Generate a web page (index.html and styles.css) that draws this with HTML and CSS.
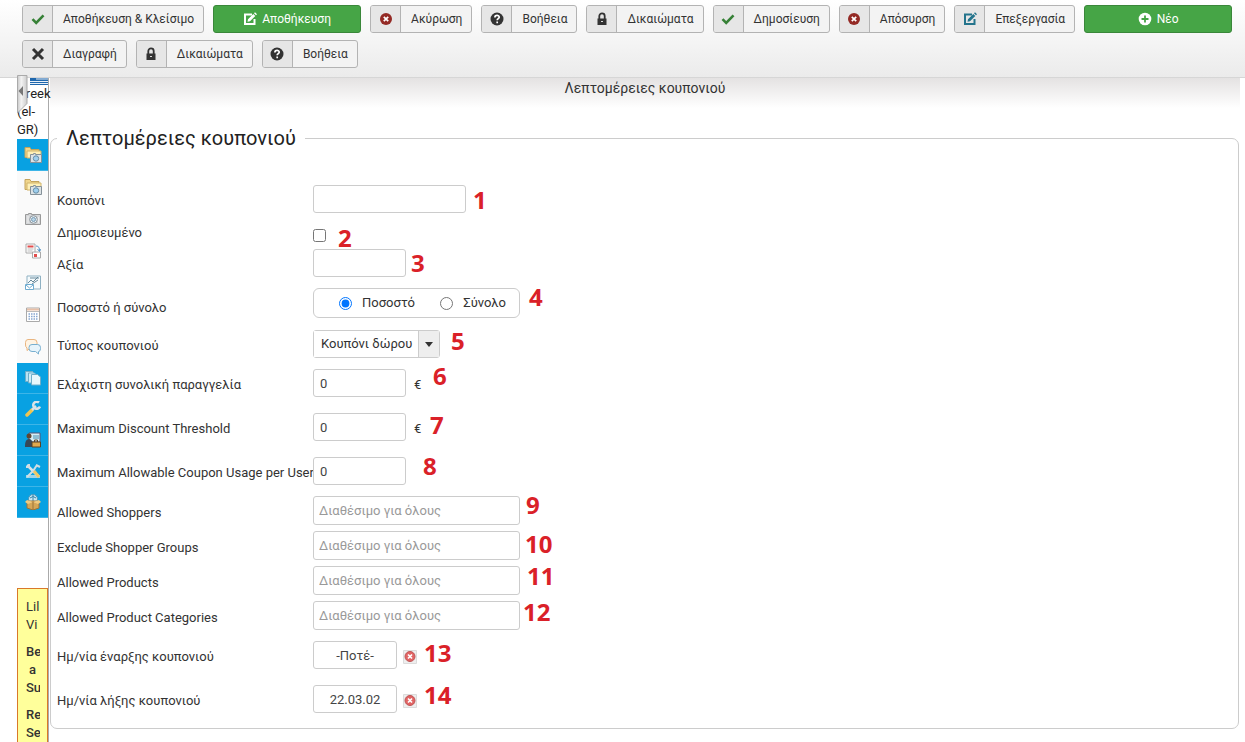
FILE: index.html
```html
<!DOCTYPE html>
<html lang="el">
<head>
<meta charset="utf-8">
<title>Λεπτομέρειες κουπονιού</title>
<link rel="stylesheet" href="styles.css">
</head>
<body>
<svg class="defs" aria-hidden="true">
  <symbol id="check" viewBox="0 0 14 14"><path d="M1.5 7.2 5.2 11 12.5 3.4" fill="none" stroke="currentColor" stroke-width="2.6"/></symbol>
  <symbol id="edit" viewBox="0 0 14 14"><path d="M9 2.5H2v9.500h9.500V7" fill="none" stroke="currentColor" stroke-width="2"/><path d="M4.500 9.800 5 7.200 10.300 2l2 2L7 9.300zM11 1.300l1-1 2 2-1 1z" fill="currentColor"/></symbol>
  <symbol id="cancel" viewBox="0 0 14 14"><circle cx="7" cy="7" r="6" fill="currentColor"/><path d="m4.800 4.800 4.400 4.400m0-4.400-4.400 4.400" stroke="#fff" stroke-width="1.700"/></symbol>
  <symbol id="help" viewBox="0 0 14 14"><circle cx="7" cy="7" r="6.500" fill="currentColor"/><path d="M4.900 5.400c0-2.600 4.300-2.500 4.300-.2 0 1.500-2 1.500-2 3.100M7.200 9.600v1.600" fill="none" stroke="#fff" stroke-width="1.700"/></symbol>
  <symbol id="lock" viewBox="0 0 14 14"><path d="M4.300 7V4c0-3.400 5.400-3.400 5.400 0v3" fill="none" stroke="currentColor" stroke-width="1.800"/><path d="M2.500 6.500h9V13h-9z" fill="currentColor"/><path d="M6 9.500h2" stroke="#ddd" stroke-width="1.200"/></symbol>
  <symbol id="cross" viewBox="0 0 14 14"><path d="m2 2 10 10M12 2 2 12" stroke="currentColor" stroke-width="3"/></symbol>
  <symbol id="plus" viewBox="0 0 14 14"><circle cx="7" cy="7" r="6.300" fill="currentColor"/><path d="M7 3.500v7M3.500 7h7" stroke="#46a546" stroke-width="1.800"/></symbol>
  <symbol id="camera" viewBox="0 0 16 16"><path d="M.5 3.500h3v-1h3v1h9v10H.5z" fill="#d4d6d8" stroke="#999"/><path d="M3 5v7M13.500 6v6" stroke="#eee"/><circle cx="8.500" cy="8.500" r="3.800" fill="#eef3f7" stroke="#8b959c"/><circle cx="8.500" cy="8.500" r="2" fill="#b9d5e8" stroke="#779bb2"/></symbol>
  <symbol id="folders" viewBox="0 0 18 18"><path d="M1 1.500h5l1 2h8v8H1z" fill="#f1d68c" stroke="#c4a35b"/><path d="M3 5h14v7H3z" fill="#fff0b6" stroke="#d1b46c"/><path d="M6.500 8.500h3v-1h2v1h6v8h-11z" fill="#dce2e5" stroke="#859199"/><circle cx="12" cy="12.500" r="2.700" fill="#9fcfee" stroke="#668da5"/></symbol>
  <symbol id="clear" viewBox="0 0 14 14"><path d="M.5.500h13v13H.5z" fill="#eee" stroke="#dcdcdc"/><circle cx="7" cy="6.500" r="5" fill="#e26464" stroke="#bd5555"/><path d="m5 4.500 4 4m0-4-4 4" stroke="#fff" stroke-width="1.700"/></symbol>
</svg>
<div class="page">
  <header class="toolbar">
    <button class="btn"><span class="ico green"><svg><use href="#check"/></svg></span><span class="txt">Αποθήκευση &amp; Κλείσιμο</span></button>
    <button class="btn primary"><svg><use href="#edit"/></svg>Αποθήκευση</button>
    <button class="btn"><span class="ico red"><svg><use href="#cancel"/></svg></span><span class="txt">Ακύρωση</span></button>
    <button class="btn"><span class="ico"><svg><use href="#help"/></svg></span><span class="txt">Βοήθεια</span></button>
    <button class="btn"><span class="ico"><svg><use href="#lock"/></svg></span><span class="txt">Δικαιώματα</span></button>
    <button class="btn"><span class="ico green"><svg><use href="#check"/></svg></span><span class="txt">Δημοσίευση</span></button>
    <button class="btn"><span class="ico red"><svg><use href="#cancel"/></svg></span><span class="txt">Απόσυρση</span></button>
    <button class="btn"><span class="ico blue"><svg><use href="#edit"/></svg></span><span class="txt">Επεξεργασία</span></button>
    <button class="btn primary"><svg><use href="#plus"/></svg>Νέο</button>
    <button class="btn"><span class="ico"><svg><use href="#cross"/></svg></span><span class="txt">Διαγραφή</span></button>
    <button class="btn"><span class="ico"><svg><use href="#lock"/></svg></span><span class="txt">Δικαιώματα</span></button>
    <button class="btn"><span class="ico"><svg><use href="#help"/></svg></span><span class="txt">Βοήθεια</span></button>
  </header>
  <div class="body">
    <aside class="side">
      <button class="handle" aria-label="Σύμπτυξη μενού"><svg viewBox="0 0 11 40"><defs><linearGradient id="hg"><stop offset="0" stop-color="#c8c8c8"/><stop offset=".4" stop-color="#f3f3f3"/><stop offset="1" stop-color="#ccc"/></linearGradient></defs><path d="M.5.500h9.500v28L.5 38z" fill="url(#hg)" stroke="#aaa"/><path d="M6 11v10L1.500 16z" fill="#777"/></svg></button>
      <div class="lang">
        <svg class="flag" viewBox="0 0 18 7"><path d="M0 0h18v7H0z" fill="#1f67ad"/><path d="M6 1h12M0 3.500h18M0 5.500h18" stroke="#e8f0f8"/></svg>
        <span>Greek (el-GR)</span>
      </div>
      <nav class="menu">
        <a href="#" class="on" aria-label="Προϊόντα"><svg><use href="#folders"/></svg></a>
        <a href="#" aria-label="Κατηγορίες"><svg><use href="#folders"/></svg></a>
        <a href="#" aria-label="Εικόνες"><svg><use href="#camera"/></svg></a>
        <a href="#" aria-label="Παραγγελίες"><svg viewBox="0 0 16 16"><path d="M1 1h9v9H1z" fill="#fff" stroke="#aaa"/><path d="M2.500 3.500h6" stroke="#e24d4d" stroke-width="2"/><path d="M2.500 6h6M2.500 8h5" stroke="#bbb"/><path d="M7.500 9h8v6h-8z" fill="#fff" stroke="#aaa"/><path d="M9 11h3v3H9z" fill="#e24d4d"/><path d="M11 3c3 0 3.500 2 3.500 5m-2-2 2 2.500L16 6" fill="none" stroke="#5597c9"/></svg></a>
        <a href="#" aria-label="Αναφορές"><svg viewBox="0 0 16 16"><path d="M2 1h13.500v13H2z" fill="#f5fafc" stroke="#8fb1c3"/><path d="m3 8 3-3 2 2 5-5M5 3h9M7 9l6-4" fill="none" stroke="#68899b"/><path d="M.5 9.500h8v5h-8z" fill="#fff" stroke="#6eabd0"/><path d="m1 10 3.500 3L8 10" fill="none" stroke="#6eabd0"/></svg></a>
        <a href="#" aria-label="Ημερολόγιο"><svg viewBox="0 0 16 16"><path d="M1.500 1h13v13.500h-13z" fill="#fff" stroke="#aaa"/><path d="M2 2.500h12" stroke="#e8c0a8" stroke-width="2"/><path d="M2 4.500h12" stroke="#bbb"/><path d="M3.500 7h9M3.500 9.500h9M3.500 12h9" stroke="#87a7d1" stroke-width="1.500" stroke-dasharray="1.500 1"/></svg></a>
        <a href="#" aria-label="Σχόλια"><svg viewBox="0 0 16 16"><path d="M3 .5h6q3 0 3 3v3q0 3-3 3H5l-3 2V9Q.5 8 .5 6V3.500q0-3 2.500-3z" fill="#fff4e4" stroke="#e9b580"/><path d="M7 5.500h5.500q3 0 3 3v1q0 3-2 3V15l-3-2.500H7q-3 0-3-3v-1q0-3 3-3z" fill="#e7f4fb" stroke="#77afd0"/></svg></a>
        <a href="#" class="blue" aria-label="Αντίγραφα"><svg viewBox="0 0 16 16"><path d="M.5 1.500h7l2 2v8h-9z" fill="#b9e3f4" stroke="#6faec9"/><path d="M3.500 3h6l2 2v8h-8z" fill="#d0edf8" stroke="#6faec9"/><path d="M6.500 4.500h6l3 2.500v8h-9z" fill="#e7f7fc" stroke="#6faec9"/></svg></a>
        <a href="#" class="blue" aria-label="Ρυθμίσεις"><svg viewBox="0 0 16 16"><path d="m2 14 5-5" stroke="#efc44f" stroke-width="3.500" stroke-linecap="round"/><path d="m7 9 4-4" stroke="#d8e2e6" stroke-width="2.500"/><path d="M14 1.500a3.500 3.500 0 1 0 1 4" fill="none" stroke="#d9e3e7" stroke-width="2.500"/></svg></a>
        <a href="#" class="blue" aria-label="Κατάστημα"><svg viewBox="0 0 16 16"><path d="M4 1h11v9H4z" fill="#d6edf5" stroke="#557"/><path d="M8 4h6M8 6h6" stroke="#488fb0"/><circle cx="4" cy="4" r="2.500" fill="#61462f"/><path d="M0 14q0-7 4-7 3 0 4 5v3H0z" fill="#374858"/><path d="M7 10h8.500v5H7z" fill="#dfa94e" stroke="#5b4325"/><path d="M9.500 10V8h3v2" fill="none" stroke="#5b4325"/></svg></a>
        <a href="#" class="blue" aria-label="Εργαλεία"><svg viewBox="0 0 16 16"><path d="M1 12h14v3H1z" fill="#9bd5ea"/><path d="m2 2 11 11" stroke="#d8e5e9" stroke-width="2.500"/><path d="M1 4h3V1M2 14l6-6 4-6M11 2l4 2" fill="none" stroke="#d1dde2" stroke-width="2"/><path d="m9 8 5 6" stroke="#edc866" stroke-width="3"/></svg></a>
        <a href="#" class="blue" aria-label="Επεκτάσεις"><svg viewBox="0 0 16 16"><circle cx="8" cy="5" r="4.500" fill="#c9e8f4" stroke="#4e97b8"/><path d="M5 4q3-3 6 0M8 1v6" fill="none" stroke="#3684aa"/><path d="M2 7h12v7l-6 2-6-2z" fill="#d5a657" stroke="#9b743a"/><path d="M0 8l2-2 6 2 6-2 2 2-3 2-5-2-5 2z" fill="#f0ca80"/><path d="M8 8v8" stroke="#9b743a"/></svg></a>
      </nav>
      <div class="note">
        <p>Lil<br>Vi</p>
        <p class="strong">Be<br><span class="mid">a</span><br>Su</p>
        <p class="strong">Re<br>Se</p>
      </div>
    </aside>
    <main class="main">
      <h1 class="bar">Λεπτομέρειες κουπονιού</h1>
      <form>
        <fieldset class="panel">
          <legend>Λεπτομέρειες κουπονιού</legend>
          <div class="row"><label for="f1">Κουπόνι</label><input id="f1" class="box wide" type="text"></div>
          <div class="row flag-row"><label for="f2">Δημοσιευμένο</label><input id="f2" class="tick" type="checkbox"></div>
          <div class="row"><label for="f3">Αξία</label><input id="f3" class="box" type="text"></div>
          <div class="row gap-m"><span class="label low">Ποσοστό ή σύνολο</span>
            <div class="radios"><input id="r1" type="radio" name="kind" checked><label for="r1">Ποσοστό</label><input id="r2" type="radio" name="kind"><label for="r2">Σύνολο</label></div></div>
          <div class="row pick-row"><label for="f5">Τύπος κουπονιού</label>
            <div class="pick"><select id="f5"><option>Κουπόνι δώρου</option></select><span class="arrow"></span></div></div>
          <div class="row gap-m"><label for="f6">Ελάχιστη συνολική παραγγελία</label><input id="f6" class="box" type="text" value="0"><span class="unit">€</span></div>
          <div class="row gap-l"><label for="f7">Maximum Discount Threshold</label><input id="f7" class="box" type="text" value="0"><span class="unit">€</span></div>
          <div class="row gap-l"><label for="f8">Maximum Allowable Coupon Usage per User</label><input id="f8" class="box" type="text" value="0"></div>
          <div class="row gap-m"><label for="f9">Allowed Shoppers</label><input id="f9" class="box multi" type="text" placeholder="Διαθέσιμο για όλους"></div>
          <div class="row gap-s"><label for="f10">Exclude Shopper Groups</label><input id="f10" class="box multi" type="text" placeholder="Διαθέσιμο για όλους"></div>
          <div class="row gap-s"><label for="f11">Allowed Products</label><input id="f11" class="box multi" type="text" placeholder="Διαθέσιμο για όλους"></div>
          <div class="row gap-s"><label for="f12">Allowed Product Categories</label><input id="f12" class="box multi" type="text" placeholder="Διαθέσιμο για όλους"></div>
          <div class="row gap-m"><label for="f13">Ημ/νία έναρξης κουπονιού</label><input id="f13" class="box date" type="text" value="-Ποτέ-"><button type="button" class="clear" aria-label="Καθαρισμός"><svg><use href="#clear"/></svg></button></div>
          <div class="row gap-l"><label for="f14">Ημ/νία λήξης κουπονιού</label><input id="f14" class="box date" type="text" value="22.03.02"><button type="button" class="clear" aria-label="Καθαρισμός"><svg><use href="#clear"/></svg></button></div>
        </fieldset>
      </form>
    </main>
  </div>
  <div class="pins">
    <span class="p1">1</span><span class="p2">2</span><span class="p3">3</span><span class="p4">4</span><span class="p5">5</span><span class="p6">6</span><span class="p7">7</span><span class="p8">8</span><span class="p9">9</span><span class="p10">10</span><span class="p11">11</span><span class="p12">12</span><span class="p13">13</span><span class="p14">14</span>
  </div>
</div>
</body>
</html>
```
FILE: styles.css
```css
* { box-sizing: border-box; }
body { margin: 0; background: #fff; color: #333; font: 13px/18px Roboto, "Liberation Sans", sans-serif; }
button, input, select { font: inherit; color: inherit; margin: 0; }
.defs { display: none; }
.page { position: relative; display: flex; flex-direction: column; height: 100vh; overflow: hidden; }

.toolbar { display: flex; flex-wrap: wrap; gap: 7px 9px; padding: 5px 8px 9px 22px; background: linear-gradient(#fff, #ebebeb); border-bottom: 1px solid #d6d6d6; }
.btn { display: flex; height: 28px; padding: 0; border: 1px solid #b3b3b3; border-radius: 3px; background: #f3f3f3; overflow: hidden; white-space: nowrap; font-size: 12px; }
.btn svg { width: 14px; height: 14px; }
.ico { display: flex; align-items: center; justify-content: center; align-self: stretch; width: 30px; background: #e6e6e6; border-right: 1px solid #b3b3b3; }
.txt { align-self: center; padding: 0 9px 0 10px; }
.green { color: #378137; }
.red { color: #942a25; }
.blue { color: #24748c; }
.btn.primary { width: 148px; align-items: center; justify-content: center; gap: 5px; background: #46a546; border-color: #3a873a; color: #fff; }

.body { flex: 1; display: flex; min-height: 0; padding: 0 5px 0 17px; }
.side { position: relative; display: flex; flex-direction: column; width: 32px; border-right: 1px solid #aaa; }
.handle { position: absolute; left: 0; top: -3px; width: 11px; height: 40px; padding: 0; border: 0; background: none; }
.handle svg { display: block; width: 11px; height: 40px; }
.lang { display: flex; flex-direction: column; height: 61px; color: #222; }
.flag { align-self: flex-end; width: 18px; height: 7px; }
.menu a { display: flex; align-items: center; justify-content: center; height: 32px; background: #fafafa; }
.menu svg { width: 16px; height: 16px; }
.menu .on, .menu .blue { height: 31px; background: #08a1e2; border-bottom: 1px solid #3db5e8; }
.menu .on { height: 32px; }
.menu .on svg, .menu .on + a svg { width: 18px; height: 18px; }
.note { flex: 1; margin-top: 70px; padding: 9px 7px 0 8px; background: #ffff9b; border: 1px solid #d9782a; border-bottom: 0; overflow: hidden; }
.note p { width: 14px; margin: 0 0 9px; overflow: hidden; }
.strong { font-weight: 500; }
.mid { padding-left: 3px; }

.main { flex: 1; min-width: 0; padding-left: 1px; }
.bar { height: 30px; margin: 0; text-align: center; font-size: 14px; font-weight: 400; line-height: 20px; background: linear-gradient(#e4e2e2, #fff); }
.panel { min-width: 0; margin: 19px 1px 0 0; padding: 36px 6px 15px; border: 1px solid #ccc; border-radius: 7px; }
.panel legend { padding: 0 9px; font-size: 20px; line-height: 22px; color: #222; }
.row { display: flex; align-items: center; }
.row > label, .row > .label { width: 256px; padding-top: 4px; white-space: nowrap; }
.row > .low { padding-top: 9px; }
.flag-row { height: 36px; padding-top: 8px; }
.flag-row > label { padding: 0 0 4px; }
.gap-s { margin-top: 6px; }
.gap-m { margin-top: 11px; }
.pick-row { margin-top: 12px; }
.gap-l { margin-top: 16px; }
.box { width: 93px; height: 28px; padding: 3px 6px; border: 1px solid #ccc; border-radius: 3px; background: #fff; color: #444; }
.wide { width: 153px; }
.multi { width: 207px; height: 29px; padding: 4px 5px; }
.box::placeholder { color: #999; }
.date { width: 84px; text-align: center; }
.tick { width: 13px; height: 13px; }
.unit { padding: 3px 0 0 8px; }
.radios { display: flex; align-items: center; width: 207px; height: 30px; padding: 0 13px 0 25px; border: 1px solid #ccc; border-radius: 6px; }
.radios input { width: 13px; height: 13px; margin-right: 10px; }
.radios label + input { margin-left: auto; }
.pick { position: relative; display: flex; height: 28px; border: 1px solid #ccc; border-radius: 3px; }
.pick select { appearance: none; width: 125px; padding: 0 22px 0 7px; border: 0; background: linear-gradient(to left, #eee 20px, #ccc 20px, #ccc 21px, #fff 21px); }
.arrow { position: absolute; right: 6px; top: 11px; border: 4px solid transparent; border-top: 5px solid #333; border-bottom: 0; pointer-events: none; }
.clear { width: 14px; height: 14px; margin: 4px 0 0 6px; padding: 0; border: 0; background: none; }
.clear svg { display: block; width: 14px; height: 14px; }

.pins span { position: absolute; color: #da2128; font: 700 24px/24px "Open Sans", "Noto Sans", sans-serif; }
.pins .p1 { left: 473px; top: 188px; }
.pins .p2 { left: 338px; top: 226px; }
.pins .p3 { left: 411px; top: 251px; }
.pins .p4 { left: 529px; top: 285px; }
.pins .p5 { left: 451px; top: 329px; }
.pins .p6 { left: 433px; top: 364px; }
.pins .p7 { left: 430px; top: 413px; }
.pins .p8 { left: 423px; top: 454px; }
.pins .p9 { left: 526px; top: 493px; }
.pins .p10 { left: 525px; top: 532px; }
.pins .p11 { left: 527px; top: 564px; }
.pins .p12 { left: 523px; top: 600px; }
.pins .p13 { left: 424px; top: 641px; }
.pins .p14 { left: 424px; top: 683px; }
```
